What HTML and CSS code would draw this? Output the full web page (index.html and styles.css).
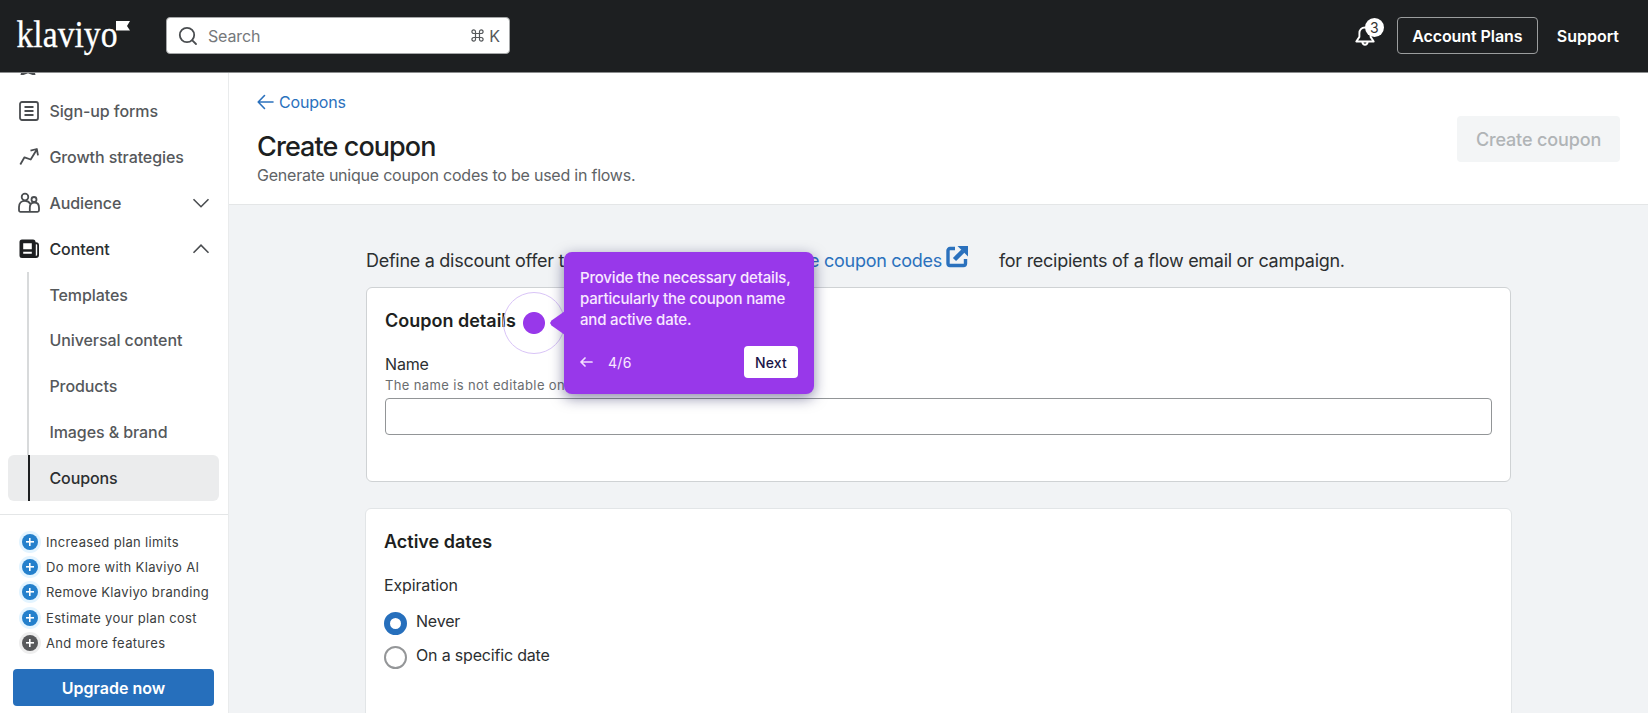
FILE: index.html
```
<!DOCTYPE html>
<html lang="en">
<head>
  <meta charset="UTF-8"/>
  <meta name="viewport" content="width=device-width, initial-scale=1.0"/>
  <title>Create coupon | Klaviyo</title>
  <link rel="stylesheet" href="styles.css">
</head>
<body>
  <header class="topbar">
    <svg class="logo" width="116" height="50" viewBox="0 0 116 50" role="img" aria-label="klaviyo">
      <text x="0.5" y="36.300" textLength="101" lengthAdjust="spacingAndGlyphs">klaviyo</text>
      <path d="M100 10h14l-3 5 3 4.500h-14z"/>
    </svg>
    <div class="search">
      <svg width="20" height="20" viewBox="0 0 20 20" fill="none" stroke="#4a4d50" stroke-width="1.8" stroke-linecap="round"><circle cx="9" cy="9" r="7.2"/><path d="M14.3 14.3l3.700 3.700"/></svg>
      <span class="search-text">Search</span>
      <span class="shortcut">
        <svg width="13" height="13" viewBox="0 0 13 13" fill="none" stroke="#55585b" stroke-width="1.2"><path d="M4.5 4.5h4v4h-4zM4.5 4.5H2.8a1.8 1.8 0 1 1 1.7-1.8zM8.500 4.500V2.700a1.800 1.800 0 1 1 1.700 1.800zM8.500 8.500h1.700a1.800 1.800 0 1 1-1.700 1.800zM4.500 8.500v1.800a1.800 1.800 0 1 1-1.700-1.800z"/></svg>
        K
      </span>
    </div>
    <div class="top-actions">
      <div class="bell">
        <svg width="22" height="22" viewBox="0 0 22 22" fill="none" stroke="#fff" stroke-width="1.9" stroke-linejoin="round" stroke-linecap="round"><path d="M11 2.500c-3.600 0-5.600 2.400-5.600 5.600v3.800L2.300 16.500h17.400l-3.100-4.600V8.100c0-3.200-2-5.600-5.600-5.600zM8.300 17c.3 1.800 1.300 2.700 2.700 2.700s2.400-.9 2.700-2.700"/></svg>
        <span class="badge">3</span>
      </div>
      <button class="btn-plans">Account Plans</button>
      <a class="support">Support</a>
    </div>
  </header>

  <div class="layout">
    <aside class="sidebar">
      <nav class="nav">
        <div class="nav-cut"><svg width="16" height="3" viewBox="0 0 16 3"><path d="M1 0h14l.5 2h-3L8 .3 3.500 2h-3z" fill="#4a4d50"/></svg></div>
        <a class="nav-item">
          <svg class="nav-icon" viewBox="0 0 22 22"><rect x="2" y="2" width="18" height="18" rx="2"/><path d="M6.500 7h9M6.500 11h9M6.500 15h9"/></svg>
          <span>Sign-up forms</span>
        </a>
        <a class="nav-item">
          <svg class="nav-icon" viewBox="0 0 22 22"><path d="M2.300 18.500l4.200-7.200 6.200 2.200 5.800-9.500M12.500 4.600l6.300-1.600 1.200 6.300"/></svg>
          <span>Growth strategies</span>
        </a>
        <a class="nav-item">
          <svg class="nav-icon" viewBox="0 0 22 22"><circle cx="7" cy="5" r="3.300"/><circle cx="16" cy="7.500" r="2.500"/><path d="M12 19.800H2.500a1.500 1.500 0 0 1-1.500-1.500V15c0-3.900 2.500-6.200 6-6.200 2.400 0 4.300 1.100 5.300 3M12 19.800h7.500a1.500 1.500 0 0 0 1.500-1.500v-2.600c0-3.300-1.900-5.200-4.600-5.200s-4.600 1.900-4.600 5.200v4.100"/></svg>
          <span>Audience</span>
          <svg class="chevron" viewBox="0 0 18 10"><path d="M1.500 1.200L9 8.700l7.500-7.500"/></svg>
        </a>
        <a class="nav-item open">
          <svg class="nav-icon" viewBox="0 0 22 22"><path class="solid" d="M4 1.500h11a2.500 2.500 0 0 1 2.500 2.500v.3H18A3 3 0 0 1 21 7.300V17a3 3 0 0 1-3 3H4a2.500 2.500 0 0 1-2.500-2.500V4A2.500 2.500 0 0 1 4 1.500z"/><path class="cutout" d="M5.200 5.200h8.600v6H5.200zM5.200 13.800h8.600v1.900H5.200zM17.800 6.200h.6a.8.8 0 0 1 .8.800v9.500a1.400 1.400 0 0 1-1.400 1.400z"/></svg>
          <span>Content</span>
          <svg class="chevron" viewBox="0 0 18 10"><path d="M1.500 8.700L9 1.200l7.500 7.500"/></svg>
        </a>
        <div class="subnav">
          <a class="sub-item">Templates</a>
          <a class="sub-item">Universal content</a>
          <a class="sub-item">Products</a>
          <a class="sub-item">Images &amp; brand</a>
          <a class="sub-item active">Coupons</a>
        </div>
      </nav>
      <div class="upgrade">
        <ul>
          <li><i class="plus"></i>Increased plan limits</li>
          <li><i class="plus"></i>Do more with Klaviyo AI</li>
          <li><i class="plus"></i>Remove Klaviyo branding</li>
          <li><i class="plus"></i>Estimate your plan cost</li>
          <li><i class="plus gray"></i>And more features</li>
        </ul>
        <button class="btn-upgrade">Upgrade now</button>
      </div>
    </aside>

    <main class="main">
      <div class="page-head">
        <div>
          <a class="back">
            <svg width="17" height="16" viewBox="0 0 17 16" fill="none" stroke="#2b71bd" stroke-width="1.600" stroke-linecap="round" stroke-linejoin="round"><path d="M16 8H1.500M7.500 1.500L1.200 8l6.300 6.500"/></svg>
            Coupons
          </a>
          <h1>Create coupon</h1>
          <p>Generate unique coupon codes to be used in flows.</p>
        </div>
        <button class="btn-create" disabled>Create coupon</button>
      </div>

      <div class="content">
        <div class="intro">
          <div class="intro-lead">
            <span>Define a discount offer to</span>
            <a>unique coupon codes</a>
          </div>
          <svg width="22" height="22" viewBox="0 0 22 22" fill="none" stroke="#2b71bd" stroke-width="3.400"><path d="M9 2.500H4A2 2 0 0 0 2 4.500v13a2 2 0 0 0 2 2h13.500a2 2 0 0 0 2-2V13"/><path d="M8.500 13.500L17 5" stroke-width="4.500"/><path d="M11.500 0H22v10.500z" fill="#2b71bd" stroke="none"/></svg>
          <span class="intro-tail">for recipients of a flow email or campaign.</span>
        </div>

        <section class="card">
          <h2>Coupon details</h2>
          <label for="name">Name</label>
          <p class="hint">The name is not editable once</p>
          <input id="name" class="field" type="text"/>

          <!-- Walkthrough step -->
          <div class="beacon"></div>
          <div class="tour">
            <p>Provide the necessary details,<br>particularly the coupon name<br>and active date.</p>
            <div class="tour-foot">
              <svg width="13" height="10" viewBox="0 0 13 10" fill="none" stroke="#f3dcff" stroke-width="1.700" stroke-linecap="round" stroke-linejoin="round"><path d="M12 5H1.200M5 1L1 5l4 4"/></svg>
              <span>4/6</span>
              <button>Next</button>
            </div>
          </div>
        </section>

        <section class="card dates">
          <h2>Active dates</h2>
          <div class="group-label">Expiration</div>
          <div class="radio"><i class="checked"></i>Never</div>
          <div class="radio"><i></i>On a specific date</div>
        </section>
      </div>
    </main>
  </div>
</body>
</html>
```

FILE: styles.css
```
*, *::before, *::after { box-sizing: border-box; }

body {
  margin: 0;
  height: 713px;
  overflow: hidden;
  font-family: Inter, sans-serif;
  font-size: 16px;
  color: #2c2f31;
  background: #f1f3f5;
}
h1, h2, p, ul { margin: 0; padding: 0; }
button { font-family: inherit; }
svg { flex: none; }

/* Top bar */
.topbar {
  display: flex;
  align-items: center;
  height: 73px;
  padding: 0 29px 1px 16px;
  background: #1d1f21;
  border-bottom: 1px solid #8b8d8e;
}
.logo { fill: #fff; overflow: visible; }
.logo text {
  font-family: "Liberation Serif", serif;
  font-size: 38px;
  stroke: #fff;
  stroke-width: .3px;
}
.search {
  display: flex;
  align-items: center;
  width: 344px; height: 37px;
  margin-left: 34px;
  padding: 0 9px 0 11px;
  background: #fff;
  border: 1px solid #a5a7a8;
  border-radius: 4px;
}
.search-text { margin-left: 10px; color: #75787b; letter-spacing: -.15px; }
.shortcut {
  display: flex; align-items: center; gap: 5px;
  margin-left: auto;
  color: #55585b;
}
.top-actions {
  display: flex; align-items: center;
  margin-left: auto;
}
.bell { position: relative; height: 22px; margin-right: 21px; }
.badge {
  position: absolute; top: -7px; left: 11px;
  width: 19px; height: 19px;
  border-radius: 50%;
  background: #fff; color: #333;
  font-size: 14px; line-height: 19px;
  text-align: center;
}
.btn-plans {
  width: 141px; height: 37px;
  margin-right: 19px; padding: 0;
  background: none; color: #fff;
  border: 1px solid #9b9d9e; border-radius: 4px;
  font-size: 16px; font-weight: 600;
  letter-spacing: -.08px;
}
.support { color: #fff; font-weight: 600; }

.layout { display: flex; height: 640px; }

/* Sidebar */
.sidebar {
  display: flex; flex-direction: column;
  width: 229px;
  background: #fff;
  border-right: 1px solid #e9ebec;
}
.nav { height: 441px; overflow: hidden; letter-spacing: -.08px; }
.nav-cut { height: 15.600px; padding-left: 20px; }
.nav-cut svg { display: block; }
.nav-item {
  display: flex; align-items: center;
  height: 45.8px;
  padding: 0 18px 0 18px;
  color: #55585b;
  font-weight: 500;
}
.nav-icon {
  width: 22px; height: 22px;
  margin-right: 9.400px;
  fill: none; stroke: #4a4d50; stroke-width: 1.8;
  stroke-linejoin: round;
}
.nav-icon .solid { fill: #1d1f21; stroke: none; }
.nav-icon .cutout { fill: #fff; stroke: none; }
.chevron {
  width: 18px; height: 10px;
  margin-left: auto;
  fill: none; stroke: #4a4d50; stroke-width: 1.6;
}
.open { color: #2c2f31; }
.subnav { padding: 0 9px 0 8px; }
.sub-item {
  display: flex; align-items: center;
  height: 45.8px;
  padding-left: 41.400px;
  color: #55585b;
  font-weight: 500;
  background: linear-gradient(#d8dadb, #d8dadb) 19px 0 / 2px 100% no-repeat;
}
.sub-item.active {
  color: #2c2f31;
  border-radius: 6px;
  background: linear-gradient(#1d1f21, #1d1f21) 20px 0 / 2px 100% no-repeat #ebeced;
}

/* Plan upsell */
.upgrade {
  flex: 1;
  padding: 14px 14px 0 13px;
  border-top: 1px solid #e4e6e7;
}
.upgrade ul { list-style: none; }
.upgrade li {
  display: flex; align-items: center;
  height: 25.3px;
  padding-left: 9px;
  color: #3b3e40;
  font-size: 13px;
  letter-spacing: .33px;
}
.plus {
  width: 16px; height: 16px;
  margin-right: 8px;
  border-radius: 50%;
  background:
    linear-gradient(#fff, #fff) center / 8px 1.6px no-repeat,
    linear-gradient(#fff, #fff) center / 1.6px 8px no-repeat,
    #2480cc;
  box-shadow: 0 0 0 3px #e3f4ff;
}
.plus.gray { background-color: #58595b; box-shadow: 0 0 0 3px #eee; }
.btn-upgrade {
  width: 201px; height: 37px;
  margin-top: 14px;
  background: #266fbc; color: #fff;
  border: none; border-radius: 4px;
  font-size: 16px; font-weight: 600;
}

/* Page header */
.main { flex: 1; }
.page-head {
  display: flex; justify-content: space-between;
  height: 132px;
  padding: 17px 28px 0;
  background: #fff;
  border-bottom: 1px solid #e4e6e7;
}
.back {
  display: flex; align-items: center; gap: 5px;
  height: 24px;
  color: #2b71bd;
  letter-spacing: -.2px;
}
h1 {
  margin-top: 15px;
  font-size: 27px; line-height: 35px; font-weight: 500;
  letter-spacing: -.92px;
  color: #1d1f21;
}
.page-head p { line-height: 22px; letter-spacing: -.23px; color: #606366; }
.btn-create {
  width: 163px; height: 46px;
  margin-top: 26px; padding: 0;
  background: #f3f5f6; color: #b0b4b6;
  border: none; border-radius: 4px;
  font-size: 18px; font-weight: 500;
  letter-spacing: -.14px;
}

/* Form */
.content { padding: 43px 136px 0 137px; }
.intro {
  display: flex; align-items: center;
  height: 24px;
  font-size: 18px;
  letter-spacing: -.28px;
  white-space: nowrap;
}
.intro svg { margin: -6px 0 0 4px; }
.intro-lead {
  display: flex; justify-content: space-between;
  width: 576px;
}
.intro-lead a { color: #2b71bd; }
.intro-tail { margin-left: 31px; }
.card {
  position: relative;
  width: 1145px; height: 195px;
  margin-top: 15px;
  padding: 20px 18px 0;
  background: #fff;
  border: 1px solid #cfd2d4; border-radius: 6px;
}
h2 {
  font-size: 18px; line-height: 26px; font-weight: 600;
  color: #1d1f21;
}
.card label { display: block; margin-top: 19px; line-height: 22px; letter-spacing: -.15px; }
.hint { font-size: 13px; line-height: 20px; letter-spacing: .37px; color: #6a6d70; }
.field {
  display: block;
  width: 1107px; height: 37px;
  margin-top: 3px;
  border: 1px solid #929597; border-radius: 4px;
}
.dates {
  width: 1147px; height: 240px;
  margin: 26px 0 0 -1px;
  border-color: #e2e5e7;
}
.group-label { margin-top: 19px; line-height: 22px; letter-spacing: -.15px; }
.radio { display: flex; height: 34.300px; line-height: 22px; letter-spacing: -.18px; }
.group-label + .radio { margin-top: 14px; }
.radio i {
  width: 23px; height: 23px;
  margin: 2px 9px 0 0;
  border: 2px solid #949698; border-radius: 50%;
}
.radio i.checked { border: 6px solid #266fbc; }

/* Walkthrough tooltip */
.beacon {
  position: absolute; left: 136px; top: 4px;
  width: 62px; height: 62px;
  border: 1px solid #d9c4f7; border-radius: 50%;
  background: radial-gradient(circle, #9838ea 10.500px, transparent 11.500px);
}
.tour {
  position: absolute; left: 197px; top: -36px;
  width: 250px; height: 142px;
  padding: 15px 16px 0 16px;
  background: #9838ea; color: #f8e8ff;
  border-radius: 8px;
  box-shadow: 0 4px 14px rgba(20, 20, 80, .5);
}
.tour::before {
  content: "";
  position: absolute; left: -14px; top: 59px;
  width: 15px; height: 24px;
  background: #9838ea;
  clip-path: polygon(100% 0, 100% 100%, 10% 60%, 0 50%, 10% 40%);
}
.tour p { font-size: 15px; line-height: 21px; font-weight: 500; letter-spacing: -.18px; white-space: nowrap; }
.tour-foot { display: flex; align-items: center; margin-top: 16px; }
.tour-foot span { margin-left: 15px; font-size: 14px; letter-spacing: .3px; }
.tour-foot button {
  width: 54px; height: 32px;
  margin-left: auto; padding: 0;
  background: #fff; color: #1a1446;
  border: none; border-radius: 4px;
  font-size: 14px; font-weight: 500;
  letter-spacing: .2px;
}
```
